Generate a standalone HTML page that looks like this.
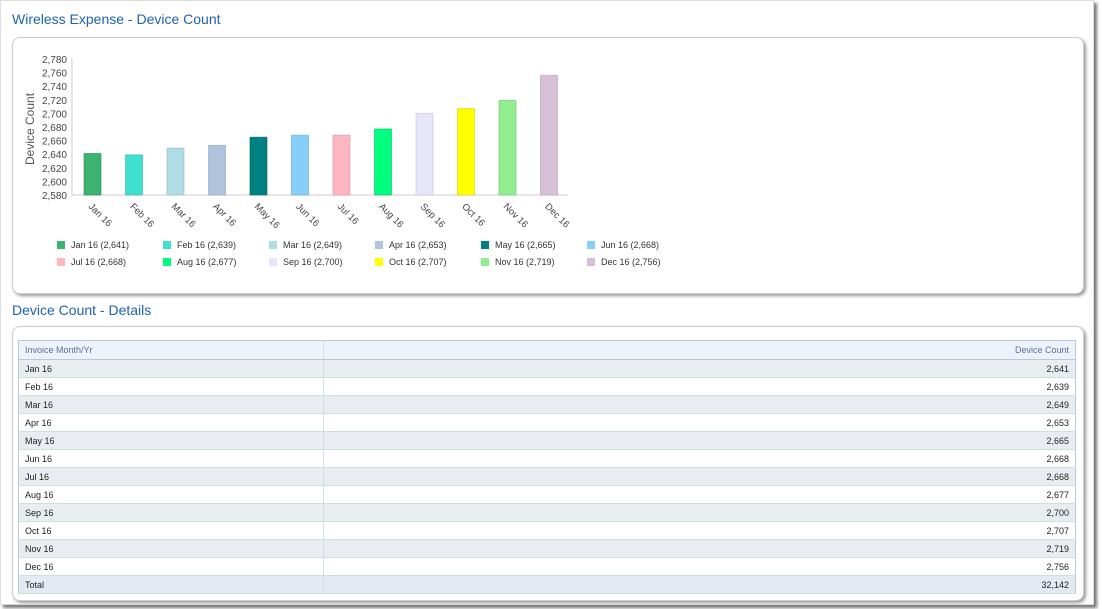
<!DOCTYPE html>
<html><head><meta charset="utf-8"><style>
body{margin:0;width:1102px;height:609px;background:#fff;font-family:"Liberation Sans",sans-serif;overflow:hidden;position:relative}
.page{position:absolute;left:0;top:0;width:1092px;height:603px;background:#fff;border:1px solid #ddd;box-shadow:3px 3px 3px #777}
.t{position:absolute;color:#1f63ad;font-size:14px}
.box{position:absolute;border:1px solid #ccc;border-radius:8px;box-shadow:2px 2px 3px #999;background:#fff}
table{position:absolute;left:18px;top:340px;width:1058px;border-collapse:collapse;font-size:9px;color:#222}
td{height:17px;padding:0 6px;border-bottom:1px solid #cfdfe0}
td:first-child{width:292px;border-right:1px solid #cfdfe0}
td:last-child{text-align:right}
tr:nth-child(even) td{background:#e9edf2}
tr.h td{background:#eef3fb;color:#5b6d9a;border-bottom:1px solid #b8c8d8;height:18px}
tr.tot td{background:#e3eaf2}
</style></head><body>
<div class="page"></div>
<div class="t" style="left:12px;top:11px">Wireless Expense - Device Count</div>
<div class="box" style="left:12px;top:37px;width:1070px;height:255px"></div>
<svg style="position:absolute;left:0;top:0" width="1102" height="300" font-family="Liberation Sans" font-size="10" fill="#444">
<text transform="translate(34,165) rotate(-90)" font-size="12" fill="#555">Device Count</text>
<g text-anchor="end">
<text x="67" y="63">2,780</text><text x="67" y="76.6">2,760</text><text x="67" y="90.2">2,740</text><text x="67" y="103.8">2,720</text><text x="67" y="117.4">2,700</text><text x="67" y="131">2,680</text><text x="67" y="144.6">2,660</text><text x="67" y="158.2">2,640</text><text x="67" y="171.8">2,620</text><text x="67" y="185.4">2,600</text><text x="67" y="199">2,580</text>
</g>
<line x1="72" y1="59" x2="72" y2="195" stroke="#ccc"/>
<line x1="72" y1="195" x2="568" y2="195" stroke="#ccc"/>
<g stroke-width="1" stroke-opacity="0.6">
<rect x="84" y="153.5" width="17" height="41.5" fill="#3cb371" stroke="#2a8a55"/>
<rect x="125.5" y="154.9" width="17" height="40.1" fill="#40e0d0" stroke="#30b0a0"/>
<rect x="167" y="148.1" width="17" height="46.9" fill="#b0dde4" stroke="#90b8c0"/>
<rect x="208.5" y="145.4" width="17" height="49.6" fill="#b0c4de" stroke="#90a0c0"/>
<rect x="250" y="137.2" width="17" height="57.8" fill="#008080" stroke="#006060"/>
<rect x="291.5" y="135.2" width="17" height="59.8" fill="#87cefa" stroke="#60a8d8"/>
<rect x="333" y="135.2" width="17" height="59.8" fill="#ffb6c1" stroke="#d890a0"/>
<rect x="374.5" y="129" width="17" height="66" fill="#00ff7f" stroke="#00c060"/>
<rect x="416" y="113.4" width="17" height="81.6" fill="#e6e6fa" stroke="#c0c0d8"/>
<rect x="457.5" y="108.6" width="17" height="86.4" fill="#ffff00" stroke="#d0d000"/>
<rect x="499" y="100.5" width="17" height="94.5" fill="#90ee90" stroke="#70c070"/>
<rect x="540.5" y="75.3" width="17" height="119.7" fill="#d8bfd8" stroke="#b8a0b8"/>
</g>
<g font-size="9.5">
<text transform="translate(88,207) rotate(45)">Jan 16</text>
<text transform="translate(129.5,207) rotate(45)">Feb 16</text>
<text transform="translate(171,207) rotate(45)">Mar 16</text>
<text transform="translate(212.5,207) rotate(45)">Apr 16</text>
<text transform="translate(254,207) rotate(45)">May 16</text>
<text transform="translate(295.5,207) rotate(45)">Jun 16</text>
<text transform="translate(337,207) rotate(45)">Jul 16</text>
<text transform="translate(378.5,207) rotate(45)">Aug 16</text>
<text transform="translate(420,207) rotate(45)">Sep 16</text>
<text transform="translate(461.5,207) rotate(45)">Oct 16</text>
<text transform="translate(503,207) rotate(45)">Nov 16</text>
<text transform="translate(544.5,207) rotate(45)">Dec 16</text>
</g>
<g font-size="9" fill="#333">
<rect x="57" y="241" width="8" height="8" fill="#3cb371"/><text x="71" y="248">Jan 16 (2,641)</text>
<rect x="163" y="241" width="8" height="8" fill="#40e0d0"/><text x="177" y="248">Feb 16 (2,639)</text>
<rect x="269" y="241" width="8" height="8" fill="#b0dde4"/><text x="283" y="248">Mar 16 (2,649)</text>
<rect x="375" y="241" width="8" height="8" fill="#b0c4de"/><text x="389" y="248">Apr 16 (2,653)</text>
<rect x="481" y="241" width="8" height="8" fill="#008080"/><text x="495" y="248">May 16 (2,665)</text>
<rect x="587" y="241" width="8" height="8" fill="#87cefa"/><text x="601" y="248">Jun 16 (2,668)</text>
<rect x="57" y="258" width="8" height="8" fill="#ffb6c1"/><text x="71" y="265">Jul 16 (2,668)</text>
<rect x="163" y="258" width="8" height="8" fill="#00ff7f"/><text x="177" y="265">Aug 16 (2,677)</text>
<rect x="269" y="258" width="8" height="8" fill="#e6e6fa"/><text x="283" y="265">Sep 16 (2,700)</text>
<rect x="375" y="258" width="8" height="8" fill="#ffff00"/><text x="389" y="265">Oct 16 (2,707)</text>
<rect x="481" y="258" width="8" height="8" fill="#90ee90"/><text x="495" y="265">Nov 16 (2,719)</text>
<rect x="587" y="258" width="8" height="8" fill="#d8bfd8"/><text x="601" y="265">Dec 16 (2,756)</text>
</g>
</svg>
<div class="t" style="left:12px;top:302px">Device Count - Details</div>
<div class="box" style="left:12px;top:326px;width:1070px;height:273px"></div>
<table style="border:1px solid #b8c8d8">
<tr class="h"><td>Invoice Month/Yr</td><td>Device Count</td></tr>
<tr><td>Jan 16</td><td>2,641</td></tr>
<tr><td>Feb 16</td><td>2,639</td></tr>
<tr><td>Mar 16</td><td>2,649</td></tr>
<tr><td>Apr 16</td><td>2,653</td></tr>
<tr><td>May 16</td><td>2,665</td></tr>
<tr><td>Jun 16</td><td>2,668</td></tr>
<tr><td>Jul 16</td><td>2,668</td></tr>
<tr><td>Aug 16</td><td>2,677</td></tr>
<tr><td>Sep 16</td><td>2,700</td></tr>
<tr><td>Oct 16</td><td>2,707</td></tr>
<tr><td>Nov 16</td><td>2,719</td></tr>
<tr><td>Dec 16</td><td>2,756</td></tr>
<tr class="tot"><td>Total</td><td>32,142</td></tr>
</table>
</body></html>
